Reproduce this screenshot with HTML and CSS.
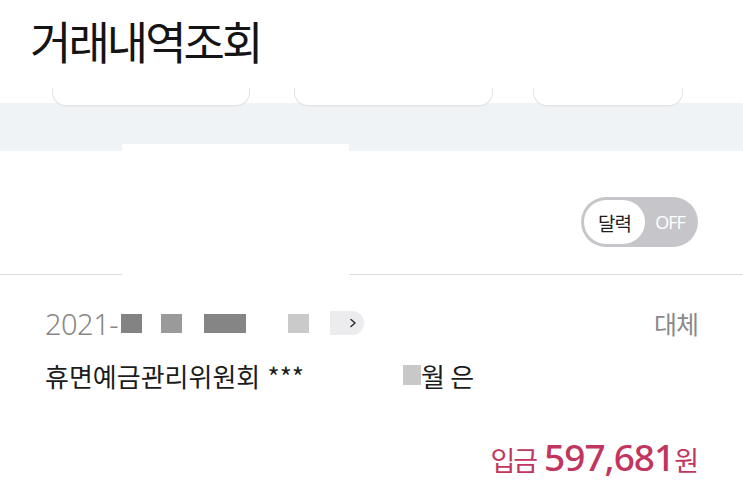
FILE: index.html
```html
<!DOCTYPE html>
<html lang="ko">
<head>
<meta charset="utf-8">
<link rel="stylesheet" href="styles.css">
</head>
<body>
<div class="page">
  <header class="header">
    <h1 class="title">거래내역조회</h1>
  </header>
  <div class="tabs">
    <div class="tab tab-1"></div>
    <div class="tab tab-2"></div>
    <div class="tab tab-3"></div>
  </div>
  <div class="band"></div>
  <div class="filter">
    <div class="toggle">
      <span class="knob">달력</span>
      <span class="off">OFF</span>
    </div>
  </div>
  <div class="item">
    <div class="item-top">
      <div class="date">
        <span class="year">2021-</span>
        <span class="blk b1"></span>
        <span class="blk b2"></span>
        <span class="blk b3"></span>
        <span class="blk b4"></span>
        <span class="more"><svg width="10" height="12" viewBox="0 0 10 12"><path d="M3 2.5 L7 6 L3 9.5" fill="none" stroke="#333" stroke-width="1.6" stroke-linecap="round" stroke-linejoin="round"/></svg></span>
      </div>
      <span class="kind">대체</span>
    </div>
    <div class="desc">
      <span class="name">휴면예금관리위원회 ***</span>
      <span class="blk b5"></span><span class="tail">월 은</span>
    </div>
    <div class="amount">
      <span class="lbl">입금</span><span class="num">597,681</span><span class="won">원</span>
    </div>
  </div>
  <div class="mask"></div>
</div>
</body>
</html>
```

FILE: styles.css
```css
* { box-sizing: border-box; margin: 0; padding: 0; }
html, body { background: #fff; }
body {
  font-family: "Noto Sans CJK KR", "Noto Sans", sans-serif;
  color: #111;
  overflow: hidden;
}
.page { position: relative; width: 743px; height: 486px; }
.header { height: 88px; padding: 13px 0 0 30px; }
.title {
  font-size: 45px;
  font-weight: 400;
  line-height: 56px;
  letter-spacing: -3px;
  color: #141414;
}
.tabs {
  height: 15px;
  display: flex;
  position: relative;
  z-index: 1;
}
.tab {
  height: 18px;
  background: #fff;
  border: 1px solid #e2e4e6;
  border-top: none;
  border-radius: 0 0 14px 14px;
  box-shadow: 0 1px 1px rgba(0,0,0,0.03);
}
.tab-1 { margin-left: 52px; width: 198px; }
.tab-2 { margin-left: 44px; width: 199px; }
.tab-3 { margin-left: 40px; width: 150px; }
.band { height: 48px; background: #f0f3f6; }
.filter {
  height: 124px;
  border-bottom: 1.5px solid #dcdcdc;
  display: flex;
  justify-content: flex-end;
  align-items: flex-start;
  padding: 46px 45px 0 0;
}
.toggle {
  width: 117px;
  height: 50px;
  border-radius: 25px;
  background: #c6c6ca;
  display: flex;
  align-items: center;
  padding: 0 3px;
}
.knob {
  width: 61px;
  height: 44px;
  border-radius: 22px;
  background: #fff;
  display: flex;
  align-items: center;
  justify-content: center;
  font-size: 19px;
  letter-spacing: -1px;
  color: #1e1e1e;
}
.off {
  flex: 1;
  text-align: center;
  font-family: "Open Sans", "Noto Sans", sans-serif;
  font-size: 18px;
  color: #fff;
  letter-spacing: -1px;
}
.item { padding: 28px 45px 0 45px; }
.item-top {
  display: flex;
  justify-content: space-between;
  align-items: center;
  height: 40px;
}
.date { display: flex; align-items: center; }
.year {
  font-family: "Noto Sans", sans-serif;
  font-size: 29px;
  font-weight: 300;
  color: #888;
  letter-spacing: -0.5px;
}
.blk { display: inline-block; height: 19px; }
.b1 { width: 21px; background: #838383; margin-left: 3px; }
.b2 { width: 21px; background: #9a9a9a; margin-left: 19px; }
.b3 { width: 42px; background: #858585; margin-left: 22px; }
.b4 { width: 21px; background: #cacaca; margin-left: 42px; }
.more {
  display: inline-flex;
  align-items: center;
  justify-content: flex-end;
  width: 34px;
  height: 24px;
  margin-left: 21px;
  background: #ececee;
  border-radius: 0 12px 12px 0;
  padding-right: 6px;
}
.kind {
  font-size: 25px;
  color: #8a8a8a;
  letter-spacing: -1px;
}
.desc {
  margin-top: 12px;
  display: flex;
  align-items: center;
  height: 40px;
  font-size: 26px;
  color: #1c1c1c;
}
.name { letter-spacing: 0; }
.b5 { width: 18px; height: 20px; background: #c8c8c8; margin-left: 99px; }
.tail { letter-spacing: -1px; }
.amount {
  margin-top: 36px;
  display: flex;
  justify-content: flex-end;
  align-items: baseline;
  color: #c2355f;
}
.lbl { font-size: 27px; letter-spacing: -2px; margin-right: 8px; }
.num {
  font-family: "Noto Sans", sans-serif;
  font-size: 37px;
  font-weight: 500;
  letter-spacing: -1px;
}
.won { font-size: 27px; letter-spacing: -1px; }
.mask {
  position: absolute;
  left: 122px;
  top: 144px;
  width: 227px;
  height: 132px;
  background: #fff;
}
```
